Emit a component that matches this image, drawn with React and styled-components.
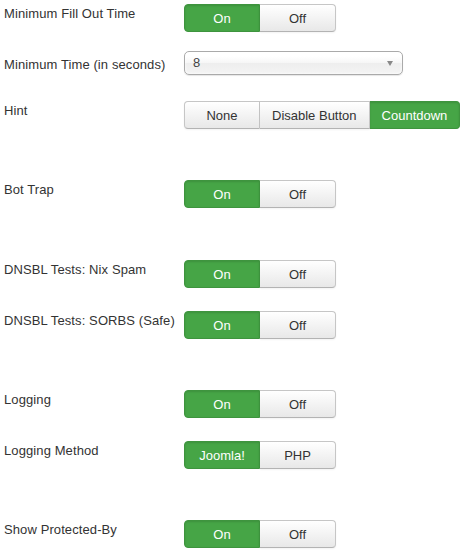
import React from "react";
import styled, { createGlobalStyle } from "styled-components";

const Global = createGlobalStyle`
  html, body { margin: 0; padding: 0; background: #fff; }
  body { font-family: "Liberation Sans", Arial, sans-serif; font-size: 13px; line-height: 18px; color: #333; }
`;

const Form = styled.div`
  padding: 0 4px;
  width: 462px;
`;

const Group = styled.div`
  display: grid;
  grid-template-columns: 180px auto;
  align-items: start;
  margin-bottom: ${(p) => p.$mb ?? 19}px;
`;

const Spacer = styled.div`
  height: ${(p) => p.$h ?? 9}px;
  margin-bottom: 19px;
`;

const Label = styled.label`
  padding-top: 5px;
  line-height: 18px;
  color: #333;
  letter-spacing: 0.1px;
  white-space: nowrap;
`;

const Controls = styled.div`
  padding-top: ${(p) => p.$top || 0}px;
`;

const BtnGroup = styled.div`
  display: inline-flex;
`;

const Btn = styled.button`
  box-sizing: border-box;
  height: 28px;
  min-width: 76px;
  padding: 1px 12px 0;
  margin: 0;
  font-family: "Liberation Sans", Arial, sans-serif;
  font-size: 13px;
  line-height: 18px;
  cursor: pointer;
  border: 1px solid;
  border-left-width: ${(p) => (p.$first ? 1 : 0)}px;
  border-radius: ${(p) =>
    p.$first ? "4px 0 0 4px" : p.$last ? "0 4px 4px 0" : "0"};
  ${(p) =>
    p.$active
      ? `
    color: #fff;
    background: #46a546;
    border-color: #3e943e;
    box-shadow: inset 0 1px 2px rgba(0,0,0,0.12);
  `
      : `
    color: #333;
    background: linear-gradient(#ffffff, #e8e8e8);
    border-color: #c6c6c6 #c6c6c6 #b3b3b3;
    box-shadow: inset 0 1px 0 rgba(255,255,255,0.2), 0 1px 2px rgba(0,0,0,0.05);
  `}
`;

const Select = styled.div`
  box-sizing: border-box;
  width: 219px;
  height: 24px;
  display: flex;
  align-items: center;
  justify-content: space-between;
  padding: 0 8px 0 8px;
  border: 1px solid #aaa;
  border-radius: 5px;
  background: linear-gradient(#fff 20%, #f6f6f6 50%, #eee 52%, #f4f4f4 100%);
  box-shadow: inset 0 0 3px #fff, 0 1px 1px rgba(0, 0, 0, 0.1);
  color: #444;
  font-size: 13px;
`;

const Arrow = styled.span`
  width: 0;
  height: 0;
  border-left: 3.5px solid transparent;
  border-right: 3.5px solid transparent;
  border-top: 5px solid #888;
  margin-right: 1px;
`;

const Toggle = ({ options, active }) => (
  <BtnGroup>
    {options.map((o, i) => (
      <Btn
        key={o}
        $first={i === 0}
        $last={i === options.length - 1}
        $active={o === active}
      >
        {o}
      </Btn>
    ))}
  </BtnGroup>
);

const ToggleRow = ({ label, options = ["On", "Off"], active = "On" }) => (
  <Group>
    <Label>{label}</Label>
    <Controls $top={4}>
      <Toggle options={options} active={active} />
    </Controls>
  </Group>
);

export default function App() {
  return (
    <>
      <Global />
      <Form>
        <ToggleRow label="Minimum Fill Out Time" />
        <Group $mb={22}>
          <Label>Minimum Time (in seconds)</Label>
          <Controls>
            <Select>
              <span>8</span>
              <Arrow />
            </Select>
          </Controls>
        </Group>
        <ToggleRow
          label="Hint"
          options={["None", "Disable Button", "Countdown"]}
          active="Countdown"
        />
        <Spacer />
        <ToggleRow label="Bot Trap" />
        <Spacer $h={10} />
        <ToggleRow label="DNSBL Tests: Nix Spam" />
        <ToggleRow label="DNSBL Tests: SORBS (Safe)" />
        <Spacer />
        <ToggleRow label="Logging" />
        <ToggleRow label="Logging Method" options={["Joomla!", "PHP"]} active="Joomla!" />
        <Spacer />
        <ToggleRow label="Show Protected-By" />
      </Form>
    </>
  );
}
